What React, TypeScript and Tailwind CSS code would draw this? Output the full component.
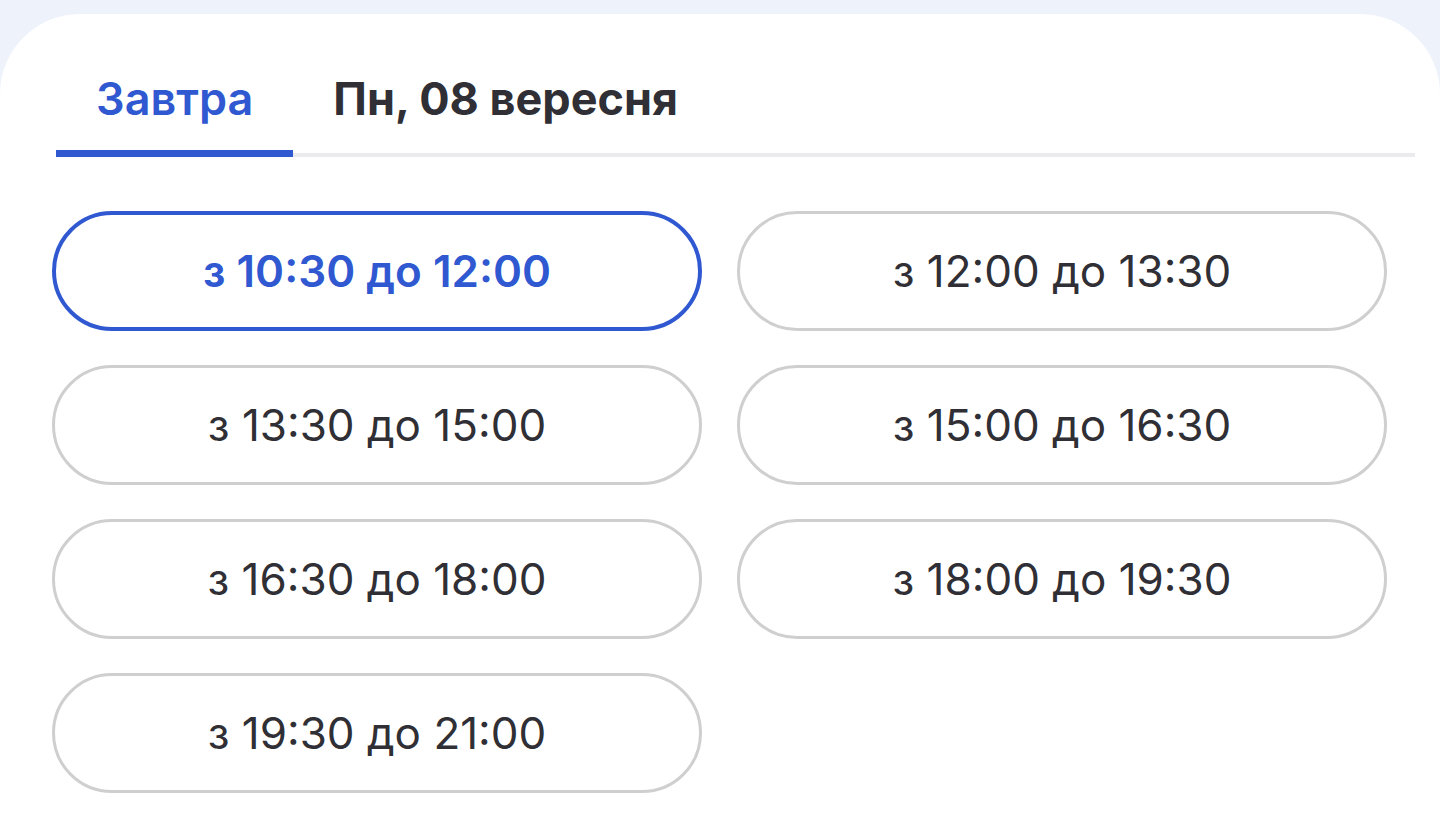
const slots = [
  "з 10:30 до 12:00",
  "з 12:00 до 13:30",
  "з 13:30 до 15:00",
  "з 15:00 до 16:30",
  "з 16:30 до 18:00",
  "з 18:00 до 19:30",
  "з 19:30 до 21:00",
];

export default function App() {
  const selected = 0;

  return (
    <main className="h-[829px] bg-[#eef2fb] pt-[14px] font-['Inter',sans-serif] overflow-hidden">
      <div className="h-full bg-white rounded-t-[80px]">

        {/* tabs */}
        <div className="flex ml-[56px] mr-[25px] pt-[58px] border-b-4 border-[#ebebed]">
          <div className="px-10 pb-[24px] -mb-[4px] border-b-[7px] border-[#3059d1] text-[#3059d1] text-[45px] leading-[54px] font-semibold">
            Завтра
          </div>
          <div className="px-10 pb-[24px] text-[#2f2f35] text-[45px] leading-[54px] font-bold">
            Пн, 08 вересня
          </div>
        </div>

        {/* time slots */}
        <div className="grid grid-cols-2 gap-x-[35px] gap-y-[34px] pl-[52px] pr-[53px] pt-[54px]">
          {slots.map((slot, i) => (
            <button
              key={slot}
              className={
                i === selected
                  ? "h-[120px] rounded-full border-4 border-[#3059d1] text-[#3059d1] text-[44px] font-semibold"
                  : "h-[120px] rounded-full border-[3px] border-[#cfcfcf] text-[#2f2f35] text-[44px] font-normal"
              }
            >
              {slot}
            </button>
          ))}
        </div>

      </div>
    </main>
  );
}
